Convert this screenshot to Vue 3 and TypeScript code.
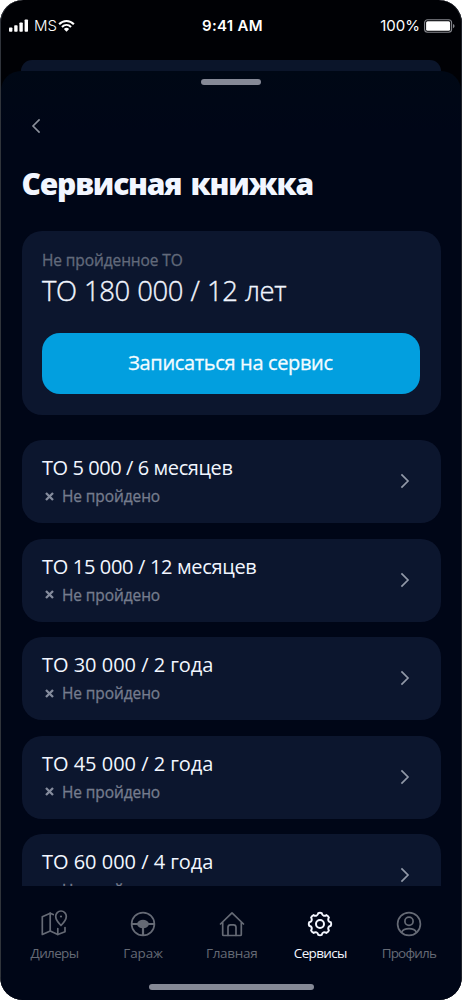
<script setup lang="ts">
interface ServiceItem {
  title: string
  status: string
  spacing: number
}

interface Tab {
  id: 'dealers' | 'garage' | 'home' | 'services' | 'profile'
  label: string
  spacing: number
  active?: boolean
}

const items: ServiceItem[] = [
  { title: 'ТО 5 000 / 6 месяцев', status: 'Не пройдено', spacing: -0.42 },
  { title: 'ТО 15 000 / 12 месяцев', status: 'Не пройдено', spacing: -0.33 },
  { title: 'ТО 30 000 / 2 года', status: 'Не пройдено', spacing: -0.02 },
  { title: 'ТО 45 000 / 2 года', status: 'Не пройдено', spacing: -0.02 },
  { title: 'ТО 60 000 / 4 года', status: 'Не пройдено', spacing: -0.02 },
]

const tabs: Tab[] = [
  { id: 'dealers', label: 'Дилеры', spacing: -0.65 },
  { id: 'garage', label: 'Гараж', spacing: -0.1 },
  { id: 'home', label: 'Главная', spacing: -0.3 },
  { id: 'services', label: 'Сервисы', spacing: -0.65 },
  { id: 'profile', label: 'Профиль', spacing: -0.8 },
]
tabs[3].active = true

// Outline of an eight-tooth cog with rounded valleys, centred in a 28x28 box.
function gearPath(): string {
  const at = (deg: number, r: number): string => {
    const a = (deg * Math.PI) / 180
    return `${(14 + r * Math.cos(a)).toFixed(2)} ${(14 + r * Math.sin(a)).toFixed(2)}`
  }
  let d = `M${at(-99, 11)}`
  for (let i = 0; i < 8; i++) {
    const base = -90 + i * 45
    d += `Q${at(base, 11.6)} ${at(base + 9, 11)}`
    d += `C${at(base + 15, 8.6)} ${at(base + 30, 8.6)} ${at(base + 36, 11)}`
  }
  return `${d}Z`
}

const gear = gearPath()
</script>

<template>
  <main class="phone">
    <header class="status">
      <div class="carrier">
        <svg width="20" height="14" viewBox="0 0 20 14" fill="#fff">
          <rect x="0" y="8.5" width="3.4" height="4.2" rx=".8" />
          <rect x="5.2" y="6.2" width="3.4" height="6.5" rx=".8" />
          <rect x="10.4" y="3.4" width="3.4" height="9.3" rx=".8" />
          <rect x="15.6" y="0.5" width="3.4" height="12.2" rx=".8" />
        </svg>
        <span class="operator">MS</span>
        <svg class="wifi" width="17" height="14" viewBox="0 0 18 14" fill="none" stroke="#fff" stroke-width="2.2">
          <path d="M1.2 5.2C5.6.6 12.4.6 16.8 5.2" />
          <path d="M4.2 8C7 5.2 11 5.2 13.8 8" />
          <path d="M6.2 10.1C7.9 8.5 10.1 8.5 11.8 10.1L9 13Z" fill="#fff" stroke="none" />
        </svg>
      </div>
      <time class="clock">9:41 AM</time>
      <div class="power">
        <span>100%</span>
        <svg width="32" height="14" viewBox="0 0 32 14">
          <rect x=".6" y=".8" width="27" height="12.4" rx="3" fill="none" stroke="#85878d" stroke-width="1.1" />
          <rect x="2.1" y="2.3" width="24" height="9.4" rx="1.5" fill="#fff" />
          <path d="M29 5v4.2q1.6-.6 1.6-2.1T29 5z" fill="#85878d" />
        </svg>
      </div>
    </header>

    <div class="behind"></div>

    <section class="sheet">
      <div class="grabber"></div>
      <button class="back" aria-label="Назад">
        <svg width="10" height="16" viewBox="0 0 10 16" fill="none" stroke="#8b909b" stroke-width="1.6">
          <path d="M8.6 1.4 2 8l6.6 6.6" />
        </svg>
      </button>
      <h1>Сервисная книжка</h1>

      <article class="next">
        <p class="caption">Не пройденное ТО</p>
        <p class="headline">ТО 180 000 / 12 лет</p>
        <button class="book">Записаться на сервис</button>
      </article>

      <ul class="list">
        <li v-for="item in items" :key="item.title" class="row">
          <div class="info">
            <p class="title" :style="{ letterSpacing: item.spacing + 'px' }">{{ item.title }}</p>
            <p class="state">
              <svg width="9" height="9" viewBox="0 0 9 9" fill="none" stroke="#858c9d" stroke-width="2.3">
                <path d="m1 1 7 7M8 1 1 8" />
              </svg>
              <span>{{ item.status }}</span>
            </p>
          </div>
          <svg class="chevron" width="10" height="16" viewBox="0 0 10 16" fill="none" stroke="#9299a8" stroke-width="1.7">
            <path d="M1.4 1.4 8 8l-6.6 6.6" />
          </svg>
        </li>
      </ul>
    </section>

    <nav class="tabs">
      <div class="items">
        <div v-for="tab in tabs" :key="tab.id" class="tab" :class="[tab.id, { active: tab.active }]">
          <svg width="28" height="28" viewBox="0 0 28 28" fill="none" stroke="currentColor" stroke-width="1.7" stroke-linejoin="round" stroke-linecap="round">
            <template v-if="tab.id === 'dealers'">
              <path d="M13.2 4.6 10.2 3.2 2.3 6.7V24.5l7.9-3.5 7.6 3.5 7.2-2.7v-4.3" />
              <path d="M10.2 3.2V21M17.800 18.500v6" />
              <path d="M21 15.5C17.2 11.8 15.7 9 15.7 6.3a5.3 5.3 0 0 1 10.6 0c0 2.7-1.5 5.5-5.3 9.2Z" />
              <circle cx="21" cy="6.5" r="1.1" fill="currentColor" stroke="none" />
            </template>
            <template v-else-if="tab.id === 'garage'">
              <circle cx="14" cy="14" r="11.4" />
              <path d="M3 14h22M14 16v9" stroke-width="2.2" />
              <path d="M8.7 14c1-2 2.5-3.3 5.3-3.3s4.3 1.3 5.3 3.3c-.7 2-2.4 3.3-5.3 3.3S9.4 16 8.7 14Z" fill="currentColor" />
            </template>
            <template v-else-if="tab.id === 'home'">
              <path d="M2.5 14 14 2.8 25.5 14M4.7 12.2V24.5q0 1 1 1h16.6q1 0 1-1V12.2" />
              <path d="M10 25.3v-8q0-2.5 2.5-2.5h3q2.5 0 2.5 2.5v8" />
            </template>
            <template v-else-if="tab.id === 'services'">
              <path :d="gear" stroke-width="2" />
              <circle cx="14" cy="14" r="4" stroke-width="2" />
            </template>
            <template v-else>
              <circle cx="14" cy="14" r="11.4" />
              <circle cx="14" cy="11.3" r="4.1" />
              <path d="M6.5 22.3c1.4-2.6 4-3.6 7.5-3.6s6.1 1 7.5 3.6" />
            </template>
          </svg>
          <span :style="{ letterSpacing: tab.spacing + 'px' }">{{ tab.label }}</span>
        </div>
      </div>
      <div class="home-bar"></div>
    </nav>
  </main>
</template>

<style>
body {
  background: #fff;
}
</style>

<style scoped>
* {
  box-sizing: border-box;
}
p, h1, ul {
  margin: 0;
  padding: 0;
}
button {
  border: 0;
  padding: 0;
  background: none;
  font: inherit;
}
svg {
  display: block;
  flex: none;
}
.phone {
  width: 462px;
  height: 1000px;
  overflow: hidden;
  display: flex;
  flex-direction: column;
  border-radius: 23px;
  background: #000105;
  color: #f2f6ff;
  font-family: "Open Sans", "Noto Sans", sans-serif;
  white-space: nowrap;
  box-shadow: inset 1px 0 #30343b, inset -1px 0 #20242b;
}
.status {
  height: 60px;
  padding: 0 6px 9px 9px;
  display: grid;
  grid-template-columns: 1fr auto 1fr;
  align-items: center;
  font: 400 15px/18px Inter, sans-serif;
  color: #fff;
}
.carrier, .power {
  display: flex;
  align-items: center;
}
.operator {
  margin-left: 5px;
  font-weight: 300;
}
.wifi {
  margin-left: 1px;
}
.clock {
  font-weight: 600;
  letter-spacing: .3px;
}
.power {
  justify-content: flex-end;
  gap: 4px;
}
.behind {
  flex: none;
  height: 11px;
  margin: 0 21px;
  border-radius: 11px 11px 0 0;
  background: #0b152a;
}
.sheet {
  height: 815px;
  overflow: hidden;
  flex: none;
  margin: 0 1px;
  padding: 0 20.5px;
  background: linear-gradient(#000815, #000617 60px);
  border-radius: 20px 20px 0 0;
}
.grabber {
  width: 60px;
  height: 6px;
  margin: 8px auto 0;
  border-radius: 3px;
  background: #858996;
}
.back {
  display: block;
  margin: 33px 0 0 9px;
}
h1 {
  height: 44px;
  margin-top: 28px;
  font-size: 30px;
  line-height: 44px;
  font-weight: 800;
  letter-spacing: -1.2px;
  word-spacing: 2.4px;
}
.next {
  height: 184px;
  margin-top: 24.5px;
  padding: 19px 20px 0 20.5px;
  border-radius: 20px;
  background: #0c162e;
}
.caption {
  font-size: 15.5px;
  line-height: 20px;
  letter-spacing: -.1px;
  -webkit-text-stroke: .3px currentColor;
  color: #626a7b;
}
.headline {
  margin-top: 2px;
  font-size: 27.5px;
  line-height: 38px;
  font-weight: 300;
  letter-spacing: -.5px;
  word-spacing: 1px;
  -webkit-text-stroke: .35px currentColor;
}
.book {
  display: block;
  width: 378px;
  height: 61.5px;
  margin: 23px 0 0 -.5px;
  padding-bottom: 2px;
  border-radius: 18px;
  background: #029fdf;
  color: #f3fcff;
  font-size: 20px;
  letter-spacing: -.35px;
  -webkit-text-stroke: .3px currentColor;
}
.list {
  margin-top: 25.5px;
  display: grid;
  gap: 15.5px;
  list-style: none;
}
.row {
  height: 83px;
  padding: 0 31px 1px 20.5px;
  display: flex;
  justify-content: space-between;
  align-items: center;
  border-radius: 20px;
  background: #0c162e;
}
.title {
  font-size: 20px;
  line-height: 30px;
  font-weight: 400;
}
.state {
  display: flex;
  align-items: center;
  gap: 8px;
  padding-left: 3px;
  margin-top: 0;
  font-size: 15.5px;
  line-height: 26px;
  letter-spacing: -.1px;
  -webkit-text-stroke: .3px currentColor;
  color: #757c8d;
}
.tabs {
  height: 114px;
  flex: none;
  margin: 0 1px;
  padding-top: 23.5px;
  background: #000617;
}
.items {
  padding: 0 7.8px 0 9.2px;
  display: grid;
  grid-template-columns: repeat(5, 1fr);
}
.tab {
  display: flex;
  flex-direction: column;
  align-items: center;
  gap: 5px;
  color: #656a75;
  font-size: 13.5px;
  line-height: 20px;
}
.active {
  color: #f4f7ff;
}
.home-bar {
  width: 165px;
  height: 6px;
  margin: 21.5px auto 0;
  border-radius: 3px;
  background: #858996;
}
</style>
